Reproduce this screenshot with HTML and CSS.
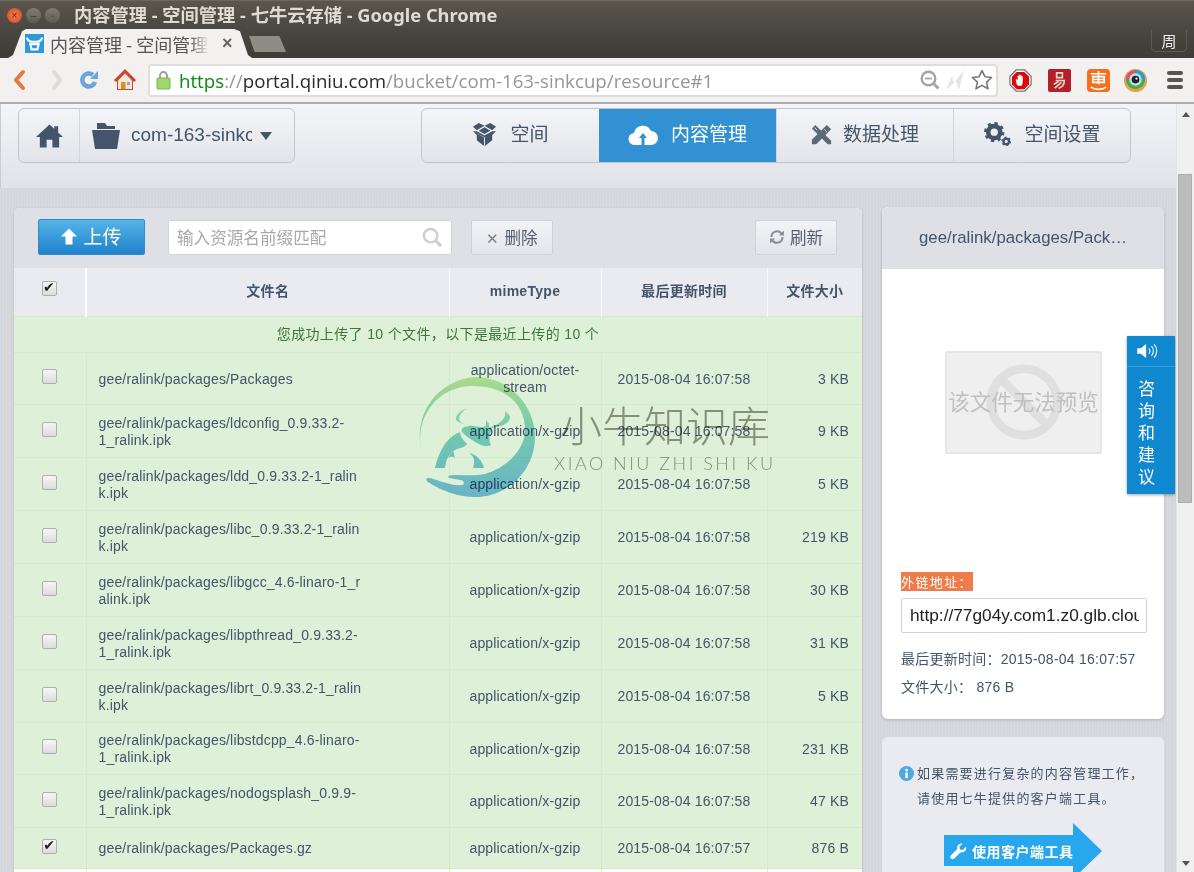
FILE: index.html
```html
<!DOCTYPE html>
<html lang="zh">
<head>
<meta charset="utf-8">
<title>内容管理 - 空间管理 - 七牛云存储</title>
<link rel="stylesheet" href="styles.css">
</head>
<body>
<header class="titlebar">
  <div class="winbtns"><span class="wb wb-close">×</span><span class="wb">–</span><span class="wb">▫</span></div>
  <div class="wintitle">内容管理 - 空间管理 - 七牛云存储 - Google Chrome</div>
</header>
<div class="tabstrip">
  <div class="tab">
    <svg class="favicon" viewBox="0 0 16 16"><rect width="16" height="16" fill="#2c9ad8"/><path d="M1.500 3C3 7 5 6.500 8 6.500S13 7 14.500 3" fill="none" stroke="#fff" stroke-width="1.800"/><path d="M4.500 8.500h7L10.500 13h-5z" fill="none" stroke="#fff" stroke-width="1.800"/></svg>
    <span class="tabtext">内容管理 - 空间管理</span>
    <span class="tabclose">×</span>
  </div>
  <div class="newtab"></div>
  <div class="profile">周</div>
</div>
<nav class="toolbar">
  <svg class="tb tb1" viewBox="0 0 22 22"><path d="M15 3L8 11l7 8" fill="none" stroke="#e8793a" stroke-width="4" stroke-linejoin="round" stroke-linecap="round"/></svg>
  <svg class="tb tb2" viewBox="0 0 22 22"><path d="M8 3l6 8-6 8" fill="none" stroke="#dcdcda" stroke-width="4" stroke-linejoin="round" stroke-linecap="round"/></svg>
  <svg class="tb tb3" viewBox="0 0 22 22"><path d="M17 13a6.500 6.500 0 1 1-2-7" fill="none" stroke="#6aa5dc" stroke-width="4.500"/><path d="M20 2v8h-8z" fill="#6aa5dc"/></svg>
  <svg class="tb tb4" viewBox="0 0 22 22"><path d="M11 0L0 11l1 1.500h2V21h16v-8.500h2L22 11z" fill="#c8482f"/><path d="M4 11.500l7-7 7 7V20H4z" fill="#eee9dc"/><rect x="7" y="13" width="4.500" height="7" fill="#d9921c"/><rect x="13" y="13" width="3" height="3" fill="#9aa6ad"/></svg>
  <div class="omnibox">
    <svg class="lock" viewBox="0 0 15 20"><path d="M4 9V5.500a3.500 3.500 0 0 1 7 0V9" fill="none" stroke="#999" stroke-width="1.800"/><rect x="1" y="8" width="13" height="11" rx="1" fill="#9ed76a" stroke="#7cb356"/></svg>
    <div class="url"><span class="u-https">https</span><span class="u-dim">://</span><span class="u-host">portal.qiniu.com</span><span class="u-dim">/bucket/com-163-sinkcup/resource#1</span></div>
    <svg class="omni-i" viewBox="0 0 20 20"><circle cx="8.500" cy="8.500" r="6.800" fill="none" stroke="#a5a5a5" stroke-width="2.400"/><path d="M13.500 13.500l5 5" stroke="#a5a5a5" stroke-width="3"/><path d="M5 8.500h7" stroke="#a5a5a5" stroke-width="1.800"/></svg>
    <svg class="omni-i omni-l" viewBox="0 0 20 20"><path d="M1 20L7 6l2 7L19 0l-5 20-3-9z" fill="#e4e4e4"/></svg>
    <svg class="omni-s" viewBox="0 0 22 22"><path d="M11 1.500l2.900 6.200 6.700.8-5 4.600 1.400 6.700-6-3.400-6 3.400 1.400-6.700-5-4.600 6.700-.8z" fill="#fff" stroke="#777" stroke-width="1.600" stroke-linejoin="round"/></svg>
  </div>
  <div class="exts">
    <svg class="ext" viewBox="0 0 24 24"><path d="M7.500 1h9L23 7.500v9L16.500 23h-9L1 16.500v-9z" fill="#fff" stroke="#777" stroke-width="1.300"/><path d="M8 3h8l5 5v8l-5 5H8l-5-5V8z" fill="#d80a0a"/><path d="M8 16l-1-5 1-.5 1 1.500V7h1.300v3.500V6h1.400v4.500V6.500H13v4V7.500h1.300V14l-1 3.500H9.500z" fill="#fff"/></svg>
    <svg class="ext" viewBox="0 0 24 24"><rect width="24" height="24" rx="2" fill="#b4202a"/><path d="M9 4h6v5H9zM8 12h9c0 4-2 7-6 8M6 16l5-3M7 20l7-6" fill="none" stroke="#f2d8c4" stroke-width="1.700"/></svg>
    <svg class="ext" viewBox="0 0 24 24"><rect width="24" height="24" rx="4" fill="#f4701a"/><path d="M4 5h16M6 8h12v6H6zM6 11h12M12 2v14M4 19c4 3 12 3 16 0" fill="none" stroke="#fff" stroke-width="1.700"/></svg>
    <svg class="ext ext-eye" viewBox="0 0 24 24"><circle cx="12" cy="12" r="12" fill="#e8a04a"/><circle cx="12" cy="11" r="10" fill="#3db04a"/><path d="M2 11a10 10 0 0 1 10-10v10z" fill="#e84a7a"/><path d="M12 1a10 10 0 0 1 10 10H12z" fill="#2e9ad8"/><circle cx="12" cy="11" r="6.500" fill="#bfe0f0"/><circle cx="12" cy="11" r="4" fill="#222"/><circle cx="13" cy="10" r="1.200" fill="#fff"/></svg>
    <div class="hamburger"><i></i><i></i><i></i></div>
  </div>
</nav>
<div class="viewport">
  <div class="page">
    <div class="topbar">
      <div class="crumb">
        <div class="crumb-home">
          <svg class="ic-home" viewBox="0 0 28 26"><path d="M14 1L0 14h4v11h7v-8h6v8h7V14h4l-5-4.700V3h-4v2.500z" fill="#44546a"/></svg>
        </div>
        <div class="crumb-bucket">
          <svg class="ic-folder" viewBox="0 0 28 26"><path d="M5 0h8l2 3h8v3H5z" fill="#44546a"/><path d="M0 7h28l-3 19H3z" fill="#44546a"/></svg>
          <span class="crumb-name">com-163-sinkcup</span>
          <span class="caret"></span>
        </div>
      </div>
      <div class="tabs">
        <a class="navtab"><svg class="nic" viewBox="0 0 26 26"><path d="M7 1l6 3-8 4.500L1 5zM19 1l-6 3 8 4.500L25 5zM13 5.500L19 9l-6 3.500L7 9zM1 9.500l4 0 8 4.500 8-4.500h4L21 13.500V19l-7.500 6v-9zM1 9.500L5 13.500V19l7.500 6v-9z" fill="#44546a"/></svg><span>空间</span></a>
        <a class="navtab active"><svg class="nic nic-cloud" viewBox="0 0 30 22"><path d="M7 22a6 6 0 0 1-1-12 9 9 0 0 1 17-2 7 7 0 0 1 0 14z" fill="#fff"/><path d="M15 10l-4 5h2.500v7h3v-7H19z" fill="#3191d3"/></svg><span>内容管理</span></a>
        <a class="navtab"><svg class="nic nic-tool" viewBox="0 0 24 24"><path d="M1 5l4-4 18 18v4h-4z" fill="#5c6878"/><path d="M18 1l5 5L6 23H1v-5z" fill="#5c6878"/><path d="M15 6l3 3M4 4l3 3" stroke="#e8e9ee" stroke-width="1"/></svg><span>数据处理</span></a>
        <a class="navtab"><svg class="nic nic-gear" viewBox="0 0 30 26"><circle cx="12" cy="11" r="6.500" fill="none" stroke="#44546a" stroke-width="5"/><circle cx="12" cy="11" r="9.500" fill="none" stroke="#44546a" stroke-width="3" stroke-dasharray="3.500 3.960"/><circle cx="25" cy="21" r="3" fill="none" stroke="#44546a" stroke-width="2.500"/><circle cx="25" cy="21" r="4.500" fill="none" stroke="#44546a" stroke-width="1.500" stroke-dasharray="2 2.700"/></svg><span>空间设置</span></a>
      </div>
    </div>
    <main class="content">
      <section class="files">
        <div class="files-bar">
          <button class="btn-upload"><svg class="up" viewBox="0 0 16 16"><path d="M8 0l8 8h-4.500v8h-7V8H0z" fill="#fff"/></svg>上传</button>
          <div class="search"><span>输入资源名前缀匹配</span>
            <svg class="search-i" viewBox="0 0 22 22"><circle cx="9" cy="9" r="7" fill="none" stroke="#d0d0d0" stroke-width="2.600"/><path d="M14 14l6 6" stroke="#d0d0d0" stroke-width="3.200"/></svg>
          </div>
          <button class="btn"><span class="x">✕</span>删除</button>
          <button class="btn btn-right"><svg class="refresh" viewBox="0 0 16 16"><path d="M13.500 8A5.500 5.500 0 0 1 3 10.500M2.500 8A5.500 5.500 0 0 1 13 5.500" fill="none" stroke="#8b8f98" stroke-width="2"/><path d="M15 1.500v5h-5zM1 14.500v-5h5z" fill="#8b8f98"/></svg>刷新</button>
        </div>
        <table class="tbl">
          <colgroup><col class="c1"><col class="c2"><col class="c3"><col class="c4"><col class="c5"></colgroup>
          <thead>
            <tr><th><span class="cb on"></span></th><th class="th-name">文件名</th><th>mimeType</th><th>最后更新时间</th><th>文件大小</th></tr>
          </thead>
          <tbody>
            <tr class="msg"><td colspan="5">您成功上传了 10 个文件，以下是最近上传的 10 个</td></tr>
            <tr class="first"><td><span class="cb"></span></td><td class="name">gee/ralink/packages/Packages</td><td class="mime">application/octet-stream</td><td class="time">2015-08-04 16:07:58</td><td class="size">3 KB</td></tr>
            <tr><td><span class="cb"></span></td><td class="name">gee/ralink/packages/ldconfig_0.9.33.2-<br>1_ralink.ipk</td><td class="mime">application/x-gzip</td><td class="time">2015-08-04 16:07:58</td><td class="size">9 KB</td></tr>
            <tr><td><span class="cb"></span></td><td class="name">gee/ralink/packages/ldd_0.9.33.2-1_ralin<br>k.ipk</td><td class="mime">application/x-gzip</td><td class="time">2015-08-04 16:07:58</td><td class="size">5 KB</td></tr>
            <tr><td><span class="cb"></span></td><td class="name">gee/ralink/packages/libc_0.9.33.2-1_ralin<br>k.ipk</td><td class="mime">application/x-gzip</td><td class="time">2015-08-04 16:07:58</td><td class="size">219 KB</td></tr>
            <tr><td><span class="cb"></span></td><td class="name">gee/ralink/packages/libgcc_4.6-linaro-1_r<br>alink.ipk</td><td class="mime">application/x-gzip</td><td class="time">2015-08-04 16:07:58</td><td class="size">30 KB</td></tr>
            <tr><td><span class="cb"></span></td><td class="name">gee/ralink/packages/libpthread_0.9.33.2-<br>1_ralink.ipk</td><td class="mime">application/x-gzip</td><td class="time">2015-08-04 16:07:58</td><td class="size">31 KB</td></tr>
            <tr><td><span class="cb"></span></td><td class="name">gee/ralink/packages/librt_0.9.33.2-1_ralin<br>k.ipk</td><td class="mime">application/x-gzip</td><td class="time">2015-08-04 16:07:58</td><td class="size">5 KB</td></tr>
            <tr class="first"><td><span class="cb"></span></td><td class="name">gee/ralink/packages/libstdcpp_4.6-linaro-<br>1_ralink.ipk</td><td class="mime">application/x-gzip</td><td class="time">2015-08-04 16:07:58</td><td class="size">231 KB</td></tr>
            <tr><td><span class="cb"></span></td><td class="name">gee/ralink/packages/nodogsplash_0.9.9-<br>1_ralink.ipk</td><td class="mime">application/x-gzip</td><td class="time">2015-08-04 16:07:58</td><td class="size">47 KB</td></tr>
            <tr class="short"><td><span class="cb on"></span></td><td class="name">gee/ralink/packages/Packages.gz</td><td class="mime">application/x-gzip</td><td class="time">2015-08-04 16:07:57</td><td class="size">876 B</td></tr>
            <tr class="blank"><td></td><td></td><td></td><td></td><td></td></tr>
          </tbody>
        </table>
      </section>
      <aside class="side">
        <section class="card">
          <div class="card-head">gee/ralink/packages/Pack…</div>
          <div class="card-body">
            <div class="preview">
              <svg class="noentry" viewBox="0 0 80 80"><circle cx="40" cy="40" r="34" fill="none" stroke="#dfdfdf" stroke-width="9"/><path d="M16 16l48 48" stroke="#dfdfdf" stroke-width="9"/></svg>
              <span>该文件无法预览</span>
            </div>
            <div class="link-label"><mark>外链地址：</mark></div>
            <div class="link-input"><span>http://77g04y.com1.z0.glb.clouddn.com/gee/ralink/packages/Packages.gz</span></div>
            <p class="meta">最后更新时间：2015-08-04 16:07:57</p>
            <p class="meta">文件大小： 876 B</p>
          </div>
        </section>
        <section class="tip">
          <svg class="info" viewBox="0 0 16 16"><circle cx="8" cy="8" r="8" fill="#4fa8e0"/><rect x="6.800" y="7" width="2.600" height="6" fill="#fff"/><circle cx="8.100" cy="4.300" r="1.500" fill="#fff"/></svg>
          <p>如果需要进行复杂的内容管理工作，<br>请使用七牛提供的客户端工具。</p>
          <a class="cta"><svg class="wrench" viewBox="0 0 18 18"><path d="M17 4l-3.500 3.500L10.500 7 10 4l3.500-3.500C10 0 7 2.500 7.500 6.500L1 13c-1 1-1 2.500 0 3.500s2.500 1 3.500 0L11 10c4 .5 7-2.500 6-6z" fill="#fff"/></svg>使用客户端工具</a>
        </section>
      </aside>
    </main>
    <aside class="feedback">
      <div class="fb-icon"><svg viewBox="0 0 24 18"><path d="M1 6h4l6-5v16l-6-5H1z" fill="#fff"/><path d="M14 6a4 4 0 0 1 0 6M17 3.500a8 8 0 0 1 0 11M20 1.500a11 11 0 0 1 0 15" fill="none" stroke="#fff" stroke-width="1.200"/></svg></div>
      <div class="fb-text">咨<br>询<br>和<br>建<br>议</div>
    </aside>
    <div class="watermark">
      <svg class="wm-logo" viewBox="0 0 130 130">
        <defs><linearGradient id="wmg" gradientUnits="userSpaceOnUse" x1="0" y1="7" x2="0" y2="127"><stop offset="0" stop-color="#c4e9a4"/><stop offset=".45" stop-color="#82d6cf"/><stop offset="1" stop-color="#78c0ea"/></linearGradient></defs>
        <path d="M12 82A59 59 0 0 1 65 7c34 0 60 28 60 60 0 34-28 60-60 60-16 0-33-6-47-15-3-2-2-5 2-4 10 3 22 8 32 7 3-1 2-4-1-5-5-1-13-2-13-3 1-2 5-2 9-2 9 0 20 1 28-1 24-7 39-26 40-42 1-30-22-46-52-46A52 52 0 0 0 12 82z" fill="url(#wmg)"/>
        <path d="M58 38C48 41 44 47 47 51c5 4 15 4 25 7l4-3v-5l3 4v4c9 0 21-4 21-11 0-2-3-4-5-6 2 7-5 13-14 16-5 1-10 1-14 0-8-1-17-3-18-8 0-5 5-9 9-11z" fill="url(#wmg)"/>
        <path d="M62 56l20 2c-2 6-4 12-1 17-5 3-11 0-19-5-5-3-8-6-10-8-2-4 3-6 10-6z" fill="url(#wmg)"/>
        <path d="M50 62C38 66 29 80 25 98h10c1-10 5-16 12-19 5-1 9-3 10-5-4-4-7-8-7-12z" fill="url(#wmg)"/>
        <path d="M59 83c7 1 13 7 15 15H63c2-6 2-11-4-15zM38 88l5-8 2 8c-3-2-5-1-7 0z" fill="url(#wmg)"/>
      </svg>
      <div class="wm-text">
        <div class="wm-cn">小牛知识库</div>
        <div class="wm-en">XIAO NIU ZHI SHI KU</div>
      </div>
    </div>
  </div>
  <div class="scrollbar">
    <span class="arrow-up"></span>
    <span class="thumb"></span>
    <span class="arrow-down"></span>
  </div>
</div>
</body>
</html>
```

FILE: styles.css
```css
* { box-sizing: border-box; }
html, body { margin: 0; padding: 0; height: 872px; overflow: hidden; }
body { font-family: "Liberation Sans", "Noto Sans CJK SC", sans-serif; color: #44546a; font-size: 14px; background: #fff; width: 1194px; }

.titlebar { height: 29px; background: linear-gradient(#5a564e, #4a4740); display: flex; align-items: center; padding-left: 7px; border-top: 1px solid #6b675e; }
.winbtns { display: flex; gap: 4px; width: 67px; }
.wb { width: 15px; height: 15px; border-radius: 50%; background: linear-gradient(#807c72, #5f5c54); color: #3c3a35; font-size: 10px; line-height: 15px; text-align: center; }
.wb-close { background: radial-gradient(#f08050, #d8431c); color: #5a2010; }
.wintitle { font-family: "Noto Sans", "Noto Sans CJK SC", sans-serif; font-size: 18.250px; line-height: 24px; font-weight: 700; color: #dfdbd2; white-space: nowrap; }

.tabstrip { height: 29px; background: linear-gradient(#4a4740, #3e3c37); display: flex; align-items: flex-end; padding-left: 8px; }
.tab { width: 244px; height: 29px; background: #f2f1f0; clip-path: polygon(0 100%, 5px 90%, 14px 8%, 18px 0, 226px 0, 232px 8%, 240px 90%, 244px 100%); display: flex; align-items: center; padding: 0 0 0 17px; flex: none; }
.favicon { width: 19px; height: 19px; flex: none; }
.tabtext { font-family: "Noto Sans CJK SC", sans-serif; font-size: 18px; color: #555; margin-left: 6px; width: 159px; white-space: nowrap; overflow: hidden; -webkit-mask-image: linear-gradient(90deg, #000 88%, transparent); mask-image: linear-gradient(90deg, #000 88%, transparent); }
.tabclose { font-size: 18px; font-weight: 700; color: #666; margin-left: 13px; }
.newtab { width: 37px; height: 16px; margin: 0 0 6px -3px; background: #8f8c85; clip-path: polygon(0 0, 82% 0, 100% 100%, 15% 100%); flex: none; }
.profile { margin: 0 7px 6px auto; width: 36px; height: 22px; border: 1px solid #5d5a53; border-top: 0; border-radius: 0 0 5px 5px; color: #eee; text-align: center; font: 15px/21px "Noto Sans CJK SC", sans-serif; }

.toolbar { height: 46px; background: #f2f1f0; border-bottom: 2px solid #adadad; display: flex; align-items: center; padding: 0 0 0 8px; }
.tb { width: 22px; height: 22px; flex: none; }
.tb1 { margin-right: 16px; }
.tb2 { margin-right: 10px; }
.tb3 { margin-right: 14px; }
.tb4 { margin-right: 12px; }
.omnibox { width: 850px; height: 33px; background: #fff; border: 2px solid #dfdedc; border-radius: 4px; display: flex; align-items: center; padding: 0 3px 0 6px; flex: none; }
.lock { width: 15px; height: 20px; flex: none; margin-right: 8px; }
.url { font-family: "Open Sans", "Noto Sans", sans-serif; font-size: 18.700px; white-space: nowrap; flex: 1; overflow: hidden; }
.u-https { color: #0a8a10; }
.u-host { color: #2b2b2b; }
.u-dim { color: #969696; }
.omni-i { width: 20px; height: 20px; flex: none; margin-right: 5px; }
.omni-l { margin-right: 6px; }
.omni-s { width: 22px; height: 22px; flex: none; }
.exts { display: flex; align-items: center; gap: 16px; margin-left: 11px; }
.ext { width: 23px; height: 23px; flex: none; }
.ext-eye { margin-left: -2px; }
.hamburger { width: 16px; margin-left: 4px; display: flex; flex-direction: column; gap: 3px; }
.hamburger i { height: 4px; background: #555; border-radius: 2px; }

.viewport { display: flex; height: 768px; }
.page { width: 1176px; height: 768px; position: relative; overflow: hidden; background: repeating-linear-gradient(90deg, rgba(255,255,255,.1) 0 1px, transparent 1px 3px), #d4d6db; flex: none; }

.topbar { height: 84px; background: linear-gradient(#f4f5f8, #e0e2e8); border-left: 1px solid #ccc; display: flex; padding: 4px 0 0 17px; }
.crumb { width: 277px; height: 55px; border: 1px solid #c3c5ca; border-radius: 6px; display: flex; background: linear-gradient(#f4f5f8, #e2e4e9); }
.crumb-home { width: 61px; display: flex; align-items: center; justify-content: center; border-right: 1px solid #d3d5da; flex: none; }
.ic-home { width: 27px; height: 26px; }
.crumb-bucket { display: flex; align-items: center; padding-left: 12px; }
.ic-folder { width: 28px; height: 26px; flex: none; }
.crumb-name { font-size: 19px; width: 121px; margin-left: 11px; overflow: hidden; white-space: nowrap; line-height: 26px; padding-bottom: 2px; }
.caret { width: 0; height: 0; border: 6.500px solid transparent; border-top: 8px solid #44546a; border-bottom: 0; margin-left: 8px; }
.tabs { display: flex; height: 55px; margin-left: 126px; border: 1px solid #c3c5ca; border-radius: 6px; overflow: hidden; background: linear-gradient(#f4f5f8, #e2e4e9); }
.navtab { width: 177px; display: flex; align-items: center; justify-content: center; gap: 13px; font-family: "Noto Sans CJK SC", sans-serif; font-size: 19px; color: #44546a; border-left: 1px solid #d3d5da; padding-bottom: 3px; }
.navtab span { padding-bottom: 3px; }
.navtab:first-child { border-left: 0; }
.navtab.active { background: #3191d3; color: #fff; border-left: 0; width: 177px; }
.nic { width: 25px; height: 25px; flex: none; }
.nic-cloud { width: 30px; height: 22px; }
.nic-tool { width: 21px; height: 21px; margin-right: -2px; }
.nic-gear { width: 28px; height: 24px; }

.content { display: flex; align-items: flex-start; padding: 20px 0 0 14px; }
.files { width: 848px; border-radius: 6px 6px 0 0; overflow: hidden; flex: none; box-shadow: 0 1px 3px rgba(0,0,0,.15); background: #fff; }
.files-bar { height: 60px; background: #dfe0e5; display: flex; align-items: center; padding: 0 25px 2px 24px; }
.btn-upload { width: 107px; height: 36px; border: 1px solid #2f8bd0; border-radius: 2px; background: linear-gradient(#55b4e8, #1f82cb); color: #fff; font: 19px "Noto Sans CJK SC", sans-serif; display: flex; align-items: center; justify-content: center; gap: 6px; padding: 0 0 3px; margin-top: -1px; }
.up { width: 16px; height: 17px; margin-top: 3px; }
.search { width: 284px; height: 35px; margin-left: 23px; background: #fff; border: 1px solid #d3d4d8; border-radius: 2px; display: flex; align-items: center; justify-content: space-between; padding: 0 8px; color: #a9a9a9; font-family: "Noto Sans CJK SC", sans-serif; font-size: 16.600px; }
.search-i { width: 21px; height: 21px; }
.btn { width: 82px; height: 35px; margin-left: 19px; border: 1px solid #cfd0d5; border-radius: 2px; background: linear-gradient(#f2f3f6, #e4e5ea); color: #555d6b; font: 16.600px "Noto Sans CJK SC", sans-serif; display: flex; align-items: center; justify-content: center; gap: 5px; padding: 0; }
.x { font-size: 15px; color: #7b7f88; }
.btn-right { margin-left: auto; }
.refresh { width: 16px; height: 16px; }

.tbl { width: 848px; border-collapse: collapse; table-layout: fixed; font-size: 14px; line-height: 17px; letter-spacing: .16px; }
.c1 { width: 72px; } .c2 { width: 363px; } .c3 { width: 152px; } .c4 { width: 166px; } .c5 { width: 95px; }
.tbl thead tr { height: 48px; background: #eaebf0; }
.tbl th { font-size: 14px; font-weight: 700; text-align: center; border-left: 1px solid #f8f8fa; color: #44546a; letter-spacing: .3px; }
.tbl th:first-child { border-left: 0; }
.tbl th.th-name { border-left: 2px solid #fff; }
.tbl tbody tr { height: 53px; background: #dff0d8; }
.tbl tbody tr.first { height: 52px; }
.tbl tbody td { border: 1px solid #d6ebcc; text-align: center; padding: 2px 13px 0; }
.tbl tbody tr.msg { height: 36px; }
.tbl tbody tr.msg td { color: #3c763d; font-size: 14px; letter-spacing: .36px; border-left: 0; border-right: 0; padding: 0; }
.tbl tbody tr.short { height: 41px; }
.tbl tbody tr.blank { background: #fff; }
.tbl tbody td:first-child { border-left: 0; padding: 0; }
.tbl tbody td.name { text-align: left; padding-left: 12px; white-space: nowrap; }
.tbl tbody td.mime { padding: 2px 14px 0; }
.tbl tbody td.time { padding: 2px 0 0; }
.tbl tbody td.size { text-align: right; border-right: 0; }
.cb { display: inline-block; width: 15px; height: 15px; border: 1px solid #aeaeae; border-radius: 2px; background: linear-gradient(#f6f6f6, #dcdcdc); vertical-align: middle; position: relative; margin-bottom: 3px; }
.tbl th .cb { margin-bottom: 6px; }
.cb.on::after { content: "✔"; position: absolute; left: 0; top: -3px; font-size: 14px; line-height: 17px; color: #222; font-family: "DejaVu Sans", sans-serif; }

.side { width: 282px; margin-left: 20px; flex: none; }
.card { background: #fff; border-radius: 6px; overflow: hidden; height: 512px; box-shadow: 0 1px 3px rgba(0,0,0,.18); margin-top: -1px; }
.card-head { height: 62px; background: #dfe0e5; text-align: center; font-size: 16.800px; line-height: 62px; }
.card-body { padding: 82px 18px 0 19px; }
.preview { width: 157px; height: 103px; margin-left: 44px; background: #efefef; border: 2px solid #e6e6e6; border-radius: 2px; position: relative; display: flex; align-items: center; justify-content: center; }
.noentry { position: absolute; left: 38px; top: 10px; width: 78px; height: 78px; }
.preview span { position: relative; font: 21.500px/1 "Noto Sans CJK SC", sans-serif; color: #c0c0c0; white-space: nowrap; margin-top: -4px; }
.link-label { margin-top: 120px; font: 13px/16px "Noto Sans CJK SC", sans-serif; letter-spacing: 1.400px; }
.link-label mark { background: #ee7b4a; color: #fff; }
.link-input { margin-top: 8px; width: 246px; height: 35px; border: 1px solid #d2d2d2; border-radius: 2px; background: #fff; color: #222; font-size: 17.300px; line-height: 33px; padding: 0 0 0 8px; overflow: hidden; white-space: nowrap; }
.link-input span { display: block; width: 229px; overflow: hidden; }
.meta { margin: 0; font-size: 14px; line-height: 20px; letter-spacing: .25px; white-space: nowrap; }
.link-input + .meta { margin-top: 16px; }
.meta + .meta { margin-top: 8px; }
.tip { margin-top: 18px; height: 200px; background: #eaebf0; border-radius: 6px; position: relative; padding: 23px 0 0 35px; font: 13px/25px "Noto Sans CJK SC", sans-serif; letter-spacing: 1.200px; }
.tip p { margin: 0; }
.info { position: absolute; left: 17px; top: 29px; width: 15px; height: 15px; }
.cta { position: absolute; left: 62px; top: 86px; width: 158px; height: 56px; background: #27a7ee; clip-path: polygon(0 12px, 129px 12px, 129px 0, 158px 28px, 129px 56px, 129px 43px, 0 43px); color: #fff; font-weight: 700; font-size: 14px; line-height: 56px; letter-spacing: .5px; display: flex; align-items: center; gap: 5px; padding-left: 6px; }
.wrench { width: 17px; height: 17px; flex: none; }

.feedback { position: absolute; left: 1127px; top: 232px; width: 48px; height: 158px; background: #0f88d0; box-shadow: 0 1px 3px rgba(0,0,0,.35); color: #fff; text-align: center; }
.fb-icon { height: 31px; border-bottom: 1px solid #3b9cd8; display: flex; align-items: center; justify-content: center; }
.fb-icon svg { width: 22px; height: 16px; margin-right: 8px; }
.fb-text { font: 17px/22px "Noto Sans CJK SC", sans-serif; padding: 10px 9px 0 0; }

.watermark { position: absolute; left: 410px; top: 266px; display: flex; pointer-events: none; mix-blend-mode: multiply; }
.wm-logo { width: 130px; height: 130px; flex: none; }
.wm-text { margin-left: 20px; padding-top: 29px; }
.wm-cn { font: 300 42px/50px "Noto Sans CJK SC", sans-serif; color: #98998e; white-space: nowrap; }
.wm-en { font: 300 18px/18px Lato, sans-serif; color: #98998e; letter-spacing: 2.500px; white-space: nowrap; margin: 5px 0 0 -6px; }

.scrollbar { width: 18px; height: 768px; background: #f0f0f0; position: relative; display: flex; flex-direction: column; align-items: center; border-left: 1px solid #e4e4e4; }
.arrow-up { width: 0; height: 0; border: 4px solid transparent; border-bottom: 5px solid #555; border-top: 0; margin-top: 8px; }
.thumb { position: absolute; top: 70px; left: 1px; width: 14px; height: 329px; background: #bcbcbc; border: 1px solid #adadad; }
.arrow-down { width: 0; height: 0; border: 4px solid transparent; border-top: 5px solid #555; border-bottom: 0; margin-top: auto; margin-bottom: 6px; }
```
